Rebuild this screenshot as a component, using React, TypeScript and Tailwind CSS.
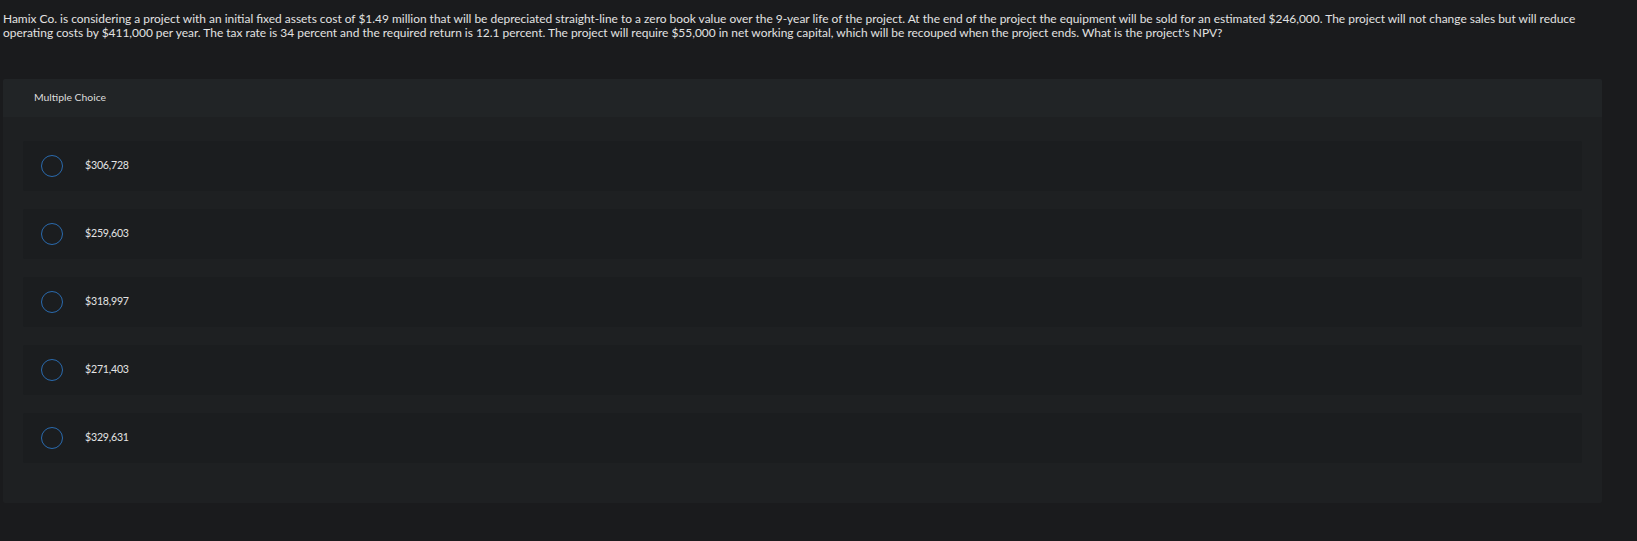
const question =
  "Hamix Co. is considering a project with an initial fixed assets cost of $1.49 million that will be depreciated straight-line to a zero book value over the 9-year life of the project. At the end of the project the equipment will be sold for an estimated $246,000. The project will not change sales but will reduce operating costs by $411,000 per year. The tax rate is 34 percent and the required return is 12.1 percent. The project will require $55,000 in net working capital, which will be recouped when the project ends. What is the project's NPV?";

const choices = ["$306,728", "$259,603", "$318,997", "$271,403", "$329,631"];

export default function App() {
  return (
    <div className="min-h-screen w-full bg-[#1a1b1d] font-['Lato',sans-serif] text-[#e2e2e2]">
      <p className="pl-[3px] pr-[30px] pt-[12px] text-[11.95px] leading-[14px]">{question}</p>

      <div className="ml-[3px] mt-[39px] w-[1599px] overflow-hidden rounded-[2px] bg-[#1e2022]">
        <div className="flex h-[38px] items-center bg-[#212426] pl-[31px] text-[10.4px] text-[#dcdcdc]">
          Multiple Choice
        </div>

        <div className="flex flex-col gap-[18px] px-[20px] pb-[40px] pt-[24px]">
          {choices.map((c) => (
            <label
              key={c}
              className="flex h-[50px] cursor-pointer items-center rounded-[2px] bg-[#1b1d1f] pl-[18px]"
            >
              <span className="h-[22px] w-[22px] rounded-full border-[1.5px] border-[#2a6aad]" />
              <span className="ml-[22px] text-[10.6px] tracking-[-0.2px] text-[#e4e4e4]">{c}</span>
            </label>
          ))}
        </div>
      </div>
    </div>
  );
}
